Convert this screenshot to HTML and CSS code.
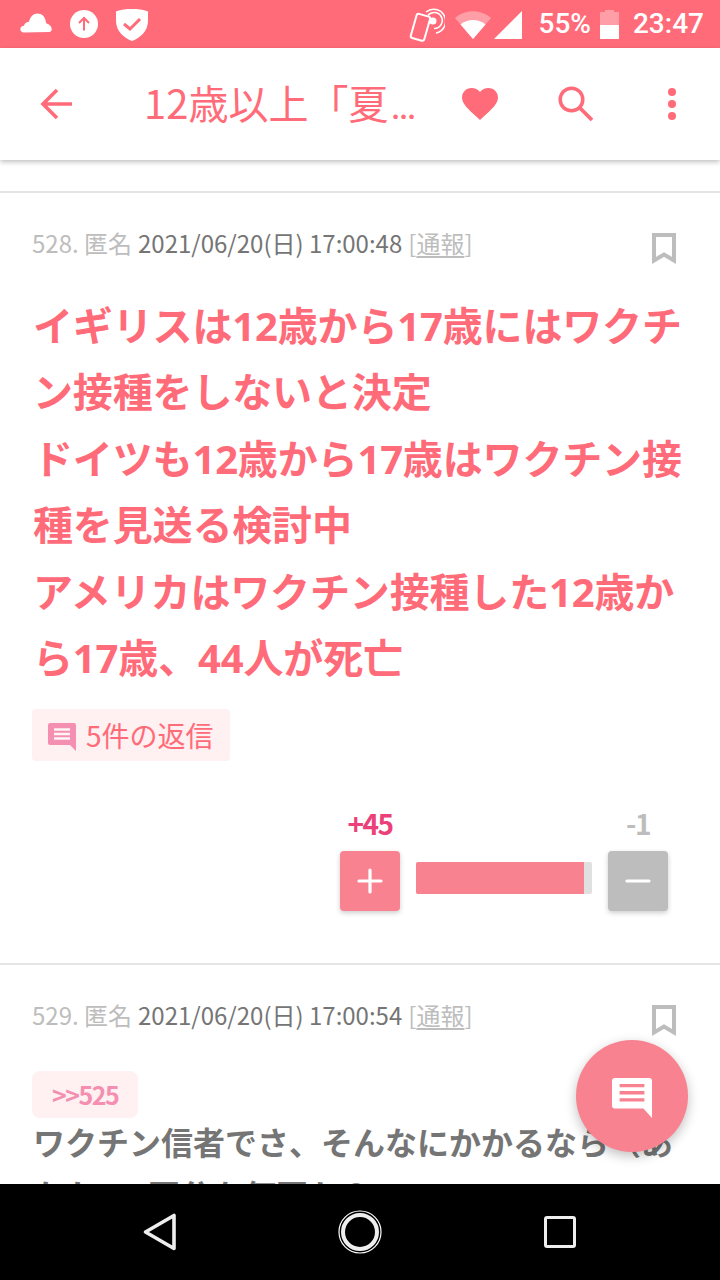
FILE: index.html
```html
<!DOCTYPE html>
<html lang="ja">

<head>
    <meta charset="utf-8">
    <title>12歳以上「夏</title>
    <link rel="stylesheet" href="styles.css">
</head>

<body>
    <div class="phone">
        <div class="status-bar">
            <svg class="st-cloud" viewBox="0 0 32 20"><path fill="#fff" d="M4 19.5C1.8 19.5.3 18 .3 16.200C.3 14.200 2 12.800 4 12.800 4.800 9.800 7 8.800 9 8.800 10 4 13.500.5 17.500.5c4 0 7 2.800 8 6.500 .2 1.500 .5 2.500 1 3.500 2.500.5 5.200 2.500 5.200 6 0 1.500-1 2.500-2.500 2.500z"/></svg>
            <svg class="st-up" viewBox="0 0 28 28"><circle cx="14" cy="14" r="14" fill="#fff"/><path fill="none" stroke="#ff6b79" stroke-width="2" d="M14 20.500V8.500M9 13l5-5 5 5"/></svg>
            <svg class="st-shield" viewBox="0 0 32 32"><path fill="#fff" d="M16 0C22 0 27 .5 32 2.500V12C32 22 24 29 16 32 8 29 0 22 0 12V2.500C5 .5 10 0 16 0z"/><path fill="none" stroke="#ff6b79" stroke-width="3" d="M8 15l6 5 10-10"/></svg>
            <div class="status-right">
                <svg class="st-nfc" viewBox="0 0 36 36"><g transform="rotate(16 12 22)"><rect x="4" y="8" width="14" height="25" rx="2" fill="none" stroke="#fff" stroke-width="2"/></g><g fill="none" stroke="#fff" stroke-width="1.600"><path d="M17 5a12 12 0 1 1 10 21"/><path d="M19 8.500a8 8 0 1 1 6 13"/></g><circle cx="24" cy="14" r="3.500" fill="#fff"/></svg>
                <svg class="st-wifi" viewBox="0 0 36 28"><path fill="#fff" opacity=".35" d="M0 7C10-2 26-2 36 7L18 28z"/><path fill="#fff" d="M5.500 13.500C12 7.500 24 7.500 30.500 13.500L18 28z"/></svg>
                <svg class="st-signal" viewBox="0 0 28 28"><path fill="#fff" d="M28 0V28H0z"/></svg>
                <span class="st-text st-pct">55%</span>
                <svg class="st-batt" viewBox="0 0 19 29"><path fill="#fff" opacity=".35" d="M5 0h9v2h5v13H0V2h5z"/><rect y="15" width="19" height="14" fill="#fff"/></svg>
                <span class="st-text st-time">23:47</span>
            </div>
        </div>

        <header class="app-bar">
            <svg class="ab-back" viewBox="0 0 34 32"><path fill="none" stroke="#ff6b79" stroke-width="3.600" d="M33 16H4M18 2L4 16l14 14"/></svg>
            <div class="ab-title">12歳以上「夏<span class="ab-dots">...</span></div>
            <svg class="ab-heart" viewBox="0 0 36 32"><path fill="#ff6b79" d="M18 32l-2.600-2.400C6 21 0 15.700 0 9.500 0 4.200 4.200 0 9.500 0c3.300 0 6.500 1.500 8.500 4 2-2.500 5.200-4 8.500-4C31.800 0 36 4.200 36 9.500c0 6.200-6 11.500-15.400 20.100z"/></svg>
            <svg class="ab-search" viewBox="0 0 36 36"><circle cx="13.500" cy="13.500" r="11.300" fill="none" stroke="#ff6b79" stroke-width="3.500"/><path stroke="#ff6b79" stroke-width="3.800" d="M21.500 21.500l12.500 12.500"/></svg>
            <svg class="ab-more" viewBox="0 0 8 32"><circle cx="4" cy="4" r="4" fill="#ff6b79"/><circle cx="4" cy="16" r="4" fill="#ff6b79"/><circle cx="4" cy="28" r="4" fill="#ff6b79"/></svg>
        </header>

        <main class="thread">
            <article class="post post-first">
                <div class="post-meta">
                    <span class="meta-light">528. 匿名</span>
                    <span class="meta-date">2021/06/20(日) 17:00:48</span>
                    <span class="meta-light">[<u>通報</u>]</span>
                    <svg class="bookmark" viewBox="0 0 24 32"><path fill="none" stroke="#bdbdbd" stroke-width="4" d="M2 2H22V27.500L12 21.500 2 27.500z"/></svg>
                </div>
                <p class="post-body post-body-hot">イギリスは12歳から17歳にはワクチン接種をしないと決定<br>ドイツも12歳から17歳はワクチン接種を見送る検討中<br>アメリカはワクチン接種した12歳から17歳、44人が死亡</p>
                <div class="reply-chip">
                    <svg class="reply-icon" viewBox="0 0 28 28"><path fill="#f48fb1" d="M2 0H26a2 2 0 0 1 2 2V28L22 22H2a2 2 0 0 1-2-2V2a2 2 0 0 1 2-2z"/><path stroke="#fff5f6" stroke-width="2.500" d="M6 6.500H22M6 11H22M6 15.500H22"/></svg>
                    <span>5件の返信</span>
                </div>
                <div class="vote">
                    <div class="vote-side">
                        <span class="vote-count vote-count-plus">+45</span>
                        <div class="vote-btn vote-btn-plus">
                            <svg viewBox="0 0 26 26"><path stroke="#fff" stroke-width="3.200" stroke-linecap="round" d="M13 2V24M2 13H24"/></svg>
                        </div>
                    </div>
                    <div class="vote-bar"><div class="vote-fill" style="width: 95.500%"></div></div>
                    <div class="vote-side">
                        <span class="vote-count vote-count-minus">-1</span>
                        <div class="vote-btn vote-btn-minus">
                            <svg viewBox="0 0 26 26"><path stroke="#fff" stroke-width="3.200" stroke-linecap="round" d="M2 13H24"/></svg>
                        </div>
                    </div>
                </div>
            </article>
            <article class="post">
                <div class="post-meta">
                    <span class="meta-light">529. 匿名</span>
                    <span class="meta-date">2021/06/20(日) 17:00:54</span>
                    <span class="meta-light">[<u>通報</u>]</span>
                    <svg class="bookmark" viewBox="0 0 24 32"><path fill="none" stroke="#bdbdbd" stroke-width="4" d="M2 2H22V27.500L12 21.500 2 27.500z"/></svg>
                </div>
                <div class="quote-chip">&gt;&gt;525</div>
                <p class="post-body post-body-reply">ワクチン信者でさ、そんなにかかるなら（あ<br>なたの1回分を何回か？</p>
            </article>
            <div class="fab">
                <svg viewBox="0 0 42 42"><path fill="#fff" d="M3 0H39a3 3 0 0 1 3 3V42L33 32H3a3 3 0 0 1-3-3V3a3 3 0 0 1 3-3z"/><path stroke="#f8828f" stroke-width="3.500" d="M8 8H34M8 15.500H34M8 23H34"/></svg>
            </div>
        </main>

        <nav class="nav-bar">
            <svg class="nav-back" viewBox="0 0 34 38"><path fill="none" stroke="#eee" stroke-width="3.600" stroke-linejoin="round" d="M31 2.500V35.500L2.500 19z"/></svg>
            <svg class="nav-home" viewBox="0 0 44 44"><circle cx="22" cy="22" r="21" fill="none" stroke="#fff" stroke-width="1.200"/><circle cx="22" cy="22" r="17" fill="none" stroke="#eee" stroke-width="4"/></svg>
            <svg class="nav-recent" viewBox="0 0 32 32"><rect x="1.500" y="1.500" width="29" height="29" rx="1.500" fill="none" stroke="#eee" stroke-width="3"/></svg>
        </nav>
    </div>
</body>

</html>
```

FILE: styles.css
```css
* {
    box-sizing: border-box;
}

body {
    margin: 0;
    background: #fff;
    font-family: "Noto Sans CJK JP", "Noto Sans", sans-serif;
}

svg {
    display: block;
    flex: none;
}

.phone {
    width: 720px;
    height: 1280px;
    display: flex;
    flex-direction: column;
    overflow: hidden;
}

/* status bar */
.status-bar {
    height: 48px;
    flex: none;
    background: #ff6b79;
    display: flex;
    align-items: center;
    padding: 0 16px 0 20px;
}

.st-cloud {
    width: 32px;
    height: 20px;
    margin-top: -3px;
}

.st-up {
    width: 28px;
    height: 28px;
    margin-left: 18px;
    margin-top: -1px;
}

.st-shield {
    width: 32px;
    height: 32px;
    margin-left: 18px;
    margin-top: 1px;
}

.status-right {
    margin-left: auto;
    display: flex;
    align-items: center;
}

.st-nfc {
    width: 36px;
    height: 36px;
    margin-top: 2px;
}

.st-wifi {
    width: 36px;
    height: 28px;
    margin-left: 10px;
    margin-top: 1px;
}

.st-signal {
    width: 28px;
    height: 28px;
    margin-left: 3px;
    margin-top: 1px;
}

.st-text {
    color: #fff;
    font-family: Roboto, sans-serif;
    font-size: 28px;
    font-weight: 500;
    line-height: 48px;
}

.st-pct {
    margin-left: 17px;
}

.st-batt {
    width: 19px;
    height: 29px;
    margin-left: 9px;
    margin-top: 1px;
}

.st-time {
    margin-left: 14px;
}

/* app bar */
.app-bar {
    height: 112px;
    flex: none;
    background: #fff;
    display: flex;
    align-items: center;
    padding: 0 40px 0 39px;
    box-shadow: 0 2px 5px rgba(0, 0, 0, 0.25);
    position: relative;
    z-index: 2;
}

.ab-back {
    width: 34px;
    height: 32px;
}

.ab-title {
    width: 280px;
    margin-left: 71px;
    color: #ff6b79;
    font-size: 40px;
    line-height: 56px;
    white-space: nowrap;
}

.ab-dots {
    font-family: Roboto, sans-serif;
    letter-spacing: -2.500px;
    margin-left: 2px;
}

.ab-heart {
    width: 36px;
    height: 32px;
    margin-left: 38px;
}

.ab-search {
    width: 36px;
    height: 36px;
    margin-left: 60px;
}

.ab-more {
    width: 8px;
    height: 32px;
    margin-left: 74px;
}

/* thread */
.thread {
    flex: 1;
    min-height: 0;
    overflow: hidden;
    position: relative;
    padding-top: 31px;
}

.post {
    border-top: 2px solid #e5e5e5;
    padding: 30px 32px 0;
}

.post-first {
    padding-bottom: 52px;
}

.post-meta {
    display: flex;
    align-items: center;
    height: 40px;
    font-size: 24px;
    line-height: 40px;
    white-space: pre;
}

.meta-light {
    color: #bdbdbd;
}

.meta-date {
    color: #757575;
    margin: 0 6px;
}

.meta-light u {
    text-underline-offset: 3px;
}

.bookmark {
    width: 24px;
    height: 32px;
    align-self: flex-start;
    margin-left: auto;
    margin-right: 12px;
    margin-top: 10px;
}

.post-body {
    margin: 0;
    padding: 0 0 0 1px;
    color: #757575;
    font-size: 32px;
    font-weight: 700;
    line-height: 53px;
}

.post-body-hot {
    padding-top: 30px;
    color: #ff6b79;
    font-family: "Noto Sans", "Noto Sans CJK JP", sans-serif;
    font-size: 40px;
    line-height: 66.400px;
    letter-spacing: -0.150px;
}

.post-body-reply {
    white-space: nowrap;
    margin-top: -3px;
}

.reply-chip {
    display: table;
    height: 52px;
    margin-top: 18px;
    padding: 0 16px;
    background: #fff0f1;
    border-radius: 4px;
    color: #ff6b79;
    font-size: 28px;
    line-height: 52px;
}

.reply-chip span {
    display: inline-block;
    vertical-align: top;
}

.reply-icon {
    display: inline-block;
    vertical-align: top;
    width: 28px;
    height: 28px;
    margin-right: 10px;
    margin-top: 14px;
}

.vote {
    display: flex;
    align-items: flex-end;
    justify-content: flex-end;
    gap: 16px;
    margin-top: 40px;
    padding-right: 20px;
}

.vote-side {
    width: 60px;
    display: flex;
    flex-direction: column;
    align-items: center;
}

.vote-count {
    font-size: 28px;
    font-weight: 700;
    line-height: 44px;
    letter-spacing: -1.500px;
    margin-bottom: 6px;
}

.vote-count-plus {
    color: #ec407a;
}

.vote-count-minus {
    color: #bdbdbd;
}

.vote-btn {
    width: 60px;
    height: 60px;
    border-radius: 4px;
    display: flex;
    align-items: center;
    justify-content: center;
    box-shadow: 0 2px 5px rgba(0, 0, 0, 0.2);
}

.vote-btn svg {
    width: 26px;
    height: 26px;
}

.vote-btn-plus {
    background: #f8828f;
}

.vote-btn-minus {
    background: #bdbdbd;
}

.vote-bar {
    width: 176px;
    height: 32px;
    margin-bottom: 17px;
    border-radius: 2px;
    background: #e0e0e0;
    overflow: hidden;
}

.vote-fill {
    height: 100%;
    background: #f8828f;
}

.quote-chip {
    display: table;
    height: 47px;
    margin-top: 36px;
    padding: 0 20px;
    background: #fff0f1;
    border-radius: 8px;
    color: #f48fb1;
    font-size: 25px;
    font-weight: 700;
    line-height: 47px;
    letter-spacing: -1.500px;
}

.fab {
    position: absolute;
    left: 576px;
    top: 880px;
    width: 112px;
    height: 112px;
    border-radius: 50%;
    background: #f8828f;
    box-shadow: 0 4px 12px rgba(0, 0, 0, 0.25);
    display: flex;
    align-items: center;
    justify-content: center;
}

.fab svg {
    width: 40px;
    height: 40px;
    margin-top: 4px;
}

/* nav bar */
.nav-bar {
    height: 96px;
    flex: none;
    background: #000;
    position: relative;
    z-index: 3;
    display: flex;
    align-items: center;
    padding: 0 0 0 143px;
}

.nav-back {
    width: 34px;
    height: 38px;
}

.nav-home {
    width: 44px;
    height: 44px;
    margin-left: 161px;
}

.nav-recent {
    width: 32px;
    height: 32px;
    margin-left: 162px;
}
```
